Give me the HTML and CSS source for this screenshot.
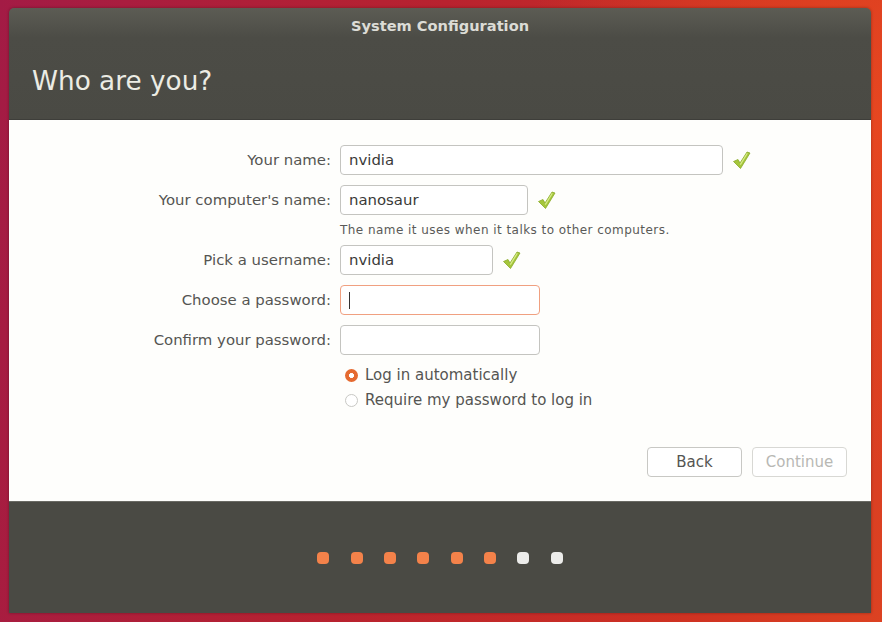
FILE: index.html
```html
<!DOCTYPE html>
<html>
<head>
<meta charset="utf-8">
<link rel="stylesheet" href="styles.css">
</head>
<body>
<div class="window">
  <div class="header">
    <div class="titlebar">System Configuration</div>
    <h1 class="page-title">Who are you?</h1>
  </div>
  <div class="content">
    <div class="form">
      <label class="label">Your name:</label>
      <div class="field">
        <div class="input w-full">nvidia</div>
        <svg class="check" viewBox="0 0 20 20" width="20" height="20"><path d="M2.5 11.5 L7 9.5 L9 13 L16 2 L19 3 L9.5 18.5 Z" fill="#a5c63b" stroke="#8aab2a" stroke-width="0.8" stroke-linejoin="round"/><path d="M9.3 14.6 L16.3 3.2" stroke="#d8ec8a" stroke-width="1.2"/></svg>
      </div>

      <label class="label">Your computer's name:</label>
      <div class="field">
        <div class="input w-comp">nanosaur</div>
        <svg class="check" viewBox="0 0 20 20" width="20" height="20"><path d="M2.5 11.5 L7 9.5 L9 13 L16 2 L19 3 L9.5 18.5 Z" fill="#a5c63b" stroke="#8aab2a" stroke-width="0.8" stroke-linejoin="round"/><path d="M9.3 14.6 L16.3 3.2" stroke="#d8ec8a" stroke-width="1.2"/></svg>
      </div>
      <div class="hint">The name it uses when it talks to other computers.</div>

      <label class="label">Pick a username:</label>
      <div class="field">
        <div class="input w-user">nvidia</div>
        <svg class="check" viewBox="0 0 20 20" width="20" height="20"><path d="M2.5 11.5 L7 9.5 L9 13 L16 2 L19 3 L9.5 18.5 Z" fill="#a5c63b" stroke="#8aab2a" stroke-width="0.8" stroke-linejoin="round"/><path d="M9.3 14.6 L16.3 3.2" stroke="#d8ec8a" stroke-width="1.2"/></svg>
      </div>

      <label class="label">Choose a password:</label>
      <div class="field">
        <div class="input w-pass focus"><span class="cursor"></span></div>
      </div>

      <label class="label">Confirm your password:</label>
      <div class="field">
        <div class="input w-pass"></div>
      </div>

      <div class="radios">
        <div class="radio-row"><span class="radio on"></span><span>Log in automatically</span></div>
        <div class="radio-row"><span class="radio"></span><span>Require my password to log in</span></div>
      </div>
    </div>
    <div class="buttons">
      <div class="btn">Back</div>
      <div class="btn disabled">Continue</div>
    </div>
  </div>
  <div class="footer">
    <div class="dots">
      <span class="dot done"></span>
      <span class="dot done"></span>
      <span class="dot done"></span>
      <span class="dot done"></span>
      <span class="dot done"></span>
      <span class="dot done"></span>
      <span class="dot"></span>
      <span class="dot"></span>
    </div>
  </div>
</div>
</body>
</html>
```

FILE: styles.css
```css
* { box-sizing: border-box; }
html, body { height: 100%; }
body {
  margin: 0;
  padding: 8px 11px 9px 9px;
  font-family: "DejaVu Sans", sans-serif;
  background:
    radial-gradient(ellipse 60% 80% at 100% 20%, rgba(232,72,32,0.9), rgba(232,72,32,0) 70%),
    linear-gradient(100deg, #a31b45 0%, #b8222f 45%, #cf3222 80%, #dc4222 100%);
  overflow: hidden;
}
.window {
  height: 605px;
  display: flex;
  flex-direction: column;
  border-radius: 5px 5px 0 0;
  overflow: hidden;
  box-shadow: 0 0 3px rgba(0,0,0,0.35);
}
.header {
  height: 112px;
  background: linear-gradient(#5c5c54 0px, #4c4c46 30px, #4a4a44 100%);
  display: flex;
  flex-direction: column;
  align-items: stretch;
  border-bottom: 1px solid #3e3e3a;
}
.titlebar {
  height: 34px;
  padding-top: 9px;
  text-align: center;
  font-weight: bold;
  font-size: 14.6px;
  line-height: 17px;
  color: #dcdcd6;
}
.page-title {
  margin: 23px 0 0 23px;
  font-weight: normal;
  font-size: 26.3px;
  color: #ecece4;
  line-height: 32px;
}
.content {
  height: 381px;
  background: #fefefc;
  display: flex;
  flex-direction: column;
  padding-top: 25px;
}
.form {
  display: grid;
  grid-template-columns: 322px 1fr;
  column-gap: 9px;
  row-gap: 10px;
  align-items: center;
}
.label {
  grid-column: 1;
  text-align: right;
  font-size: 14.9px;
  color: #555552;
}
.field {
  grid-column: 2;
  display: flex;
  align-items: center;
  gap: 8px;
}
.input {
  height: 30px;
  border: 1px solid #c4c4c0;
  border-radius: 4px;
  background: #fff;
  padding: 0 8px;
  font-size: 14.9px;
  color: #3a3a38;
  line-height: 28px;
  display: flex;
  align-items: center;
}
.w-full { width: 383px; }
.w-comp { width: 188px; }
.w-user { width: 153px; }
.w-pass { width: 200px; }
.input.focus { border-color: #f0a080; }
.cursor {
  display: block;
  width: 1px;
  height: 17px;
  background: #333;
}
.check { flex: none; }
.hint {
  grid-column: 2;
  font-size: 12px;
  letter-spacing: 0.45px;
  color: #5a5a58;
  height: 15px;
  line-height: 13px;
  margin-top: -5px;
  padding-top: 4px;
}
.radios {
  grid-column: 2;
  display: flex;
  flex-direction: column;
  gap: 5px;
  padding-left: 5px;
}
.radio-row {
  display: flex;
  align-items: center;
  gap: 7px;
  height: 20px;
  font-size: 15px;
  color: #555552;
}
.radio {
  width: 13px;
  height: 13px;
  border-radius: 50%;
  border: 1px solid #c8c8c4;
  background: #fff;
  flex: none;
}
.radio.on {
  border: none;
  background: radial-gradient(circle, #fff 0 2.2px, #e56a30 2.8px 100%);
}
.buttons {
  margin-top: auto;
  margin-bottom: 24px;
  display: flex;
  justify-content: flex-end;
  gap: 10px;
  padding-right: 24px;
}
.btn {
  width: 95px;
  height: 30px;
  border: 1px solid #c8c8c4;
  border-radius: 4px;
  background: #fff;
  text-align: center;
  line-height: 28px;
  font-size: 15px;
  color: #555552;
}
.btn.disabled { color: #b8b8b4; border-color: #d8d8d4; }
.footer {
  flex: 1;
  background: #4a4a44;
  border-top: 1px solid #6a6a64;
  display: flex;
  align-items: center;
  justify-content: center;
}
.dots {
  display: flex;
  gap: 21.4px;
}
.dot {
  width: 12px;
  height: 12px;
  border-radius: 4px;
  background: #ececea;
}
.dot.done { background: #f4824a; }
```
